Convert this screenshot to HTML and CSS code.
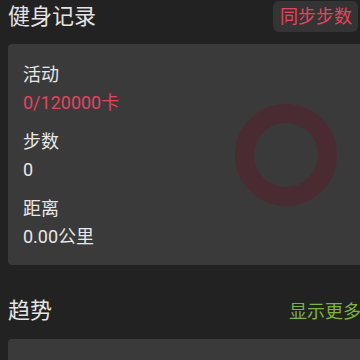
FILE: index.html
```html
<!DOCTYPE html>
<html>
<head>
<meta charset="utf-8">
<link rel="stylesheet" href="styles.css">
</head>
<body>
<div class="page">
  <div class="header">
    <div class="title">健身记录</div>
    <div class="sync-btn">同步步数</div>
  </div>
  <div class="card">
    <div class="stats">
      <div class="stat">
        <div class="label">活动</div>
        <div class="value red">0/120000卡</div>
      </div>
      <div class="stat">
        <div class="label">步数</div>
        <div class="value">0</div>
      </div>
      <div class="stat">
        <div class="label">距离</div>
        <div class="value">0.00公里</div>
      </div>
    </div>
    <svg class="ring" width="102" height="102" viewBox="0 0 102 102">
      <circle cx="51" cy="51" r="41.5" fill="none" stroke="#4b2b32" stroke-width="19"/>
    </svg>
  </div>
  <div class="header trend-header">
    <div class="title">趋势</div>
    <div class="more">显示更多</div>
  </div>
  <div class="card card2"></div>
</div>
</body>
</html>
```
FILE: styles.css
```css
html, body {
  margin: 0;
  padding: 0;
  background: #222222;
  overflow: hidden;
  width: 360px;
  height: 360px;
}
.page {
  padding-left: 8px;
  font-family: Roboto, "Noto Sans CJK SC", sans-serif;
  color: #e6e6e6;
}
.header {
  display: flex;
  align-items: center;
  justify-content: space-between;
  height: 31px;
  margin-top: 1px;
  padding-right: 2px;
}
.title {
  font-size: 22px;
  line-height: 31px;
  color: #e4e4e4;
}
.sync-btn {
  background: #343434;
  border-radius: 6px;
  height: 31px;
  line-height: 31px;
  padding: 0 6px 0 7px;
  font-size: 18px;
  color: #e2455f;
}
.card {
  margin-top: 12px;
  background: #3a3a3a;
  border-radius: 4px;
  width: 360px;
  height: 221px;
  box-sizing: border-box;
  padding: 17px 0 0 15px;
  display: flex;
  align-items: flex-start;
}
.stats {
  display: flex;
  flex-direction: column;
  gap: 11px;
  flex: 1;
}
.label, .value {
  font-size: 18px;
  line-height: 28px;
  color: #e8e8e8;
}
.value.red {
  color: #e2455f;
}
.ring {
  margin-top: 43px;
  margin-right: 31px;
}
.trend-header {
  margin-top: 29px;
  height: 32px;
  padding-right: 0;
}
.more {
  font-size: 18px;
  line-height: 32px;
  color: #7cb342;
  margin-top: 3px;
  margin-right: -1px;
}
.card2 {
  margin-top: 13px;
  height: 60px;
  padding: 0;
}
```
